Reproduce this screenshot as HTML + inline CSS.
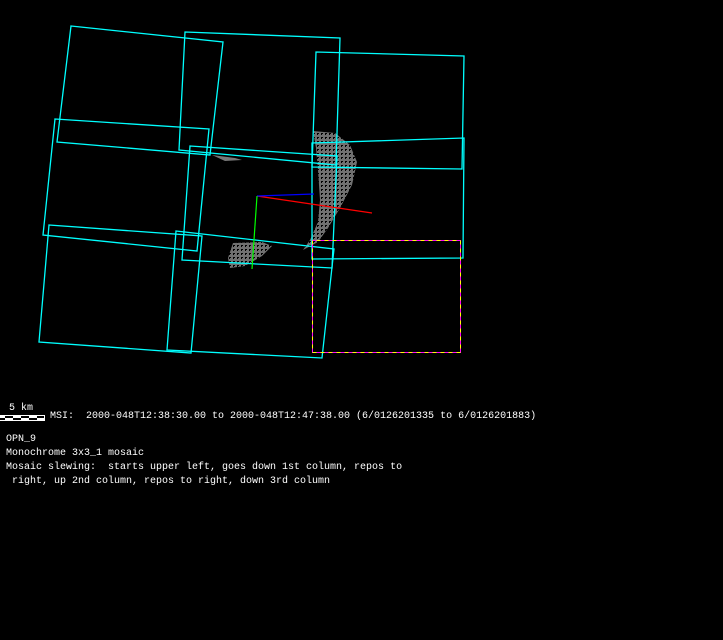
<!DOCTYPE html>
<html><head><style>
html,body{margin:0;padding:0;background:#000;width:723px;height:640px;overflow:hidden}
svg{position:absolute;left:0;top:0}
.t{position:absolute;color:#fff;font:10px "Liberation Mono",monospace;white-space:pre;line-height:14px}
</style></head><body>
<svg width="723" height="640" viewBox="0 0 723 640">
<defs>
<pattern id="g" width="4" height="4" patternUnits="userSpaceOnUse">
<rect width="4" height="4" fill="#707070"/><rect x="1" y="1" width="2" height="1" fill="#000"/><rect x="1" y="2" width="1" height="1" fill="#000"/>
</pattern>
</defs>
<path d="M313,131 L335,133 L350,145 L357,162 L352,185 L340,208 L328,228 L318,242 L303,250 L310,240 L318,222 L320,200 L318,170 L316,148 Z" fill="url(#g)"/>
<path d="M233,243 L262,242 L272,246 L262,256 L245,266 L230,268 L228,258 Z" fill="url(#g)"/>
<path d="M212,155 L235,158 L242,160 L225,161 Z" fill="#777"/>
<g fill="none" stroke="#0ff" stroke-width="1.3">
<polygon points="71,26 223,42 210,155 57,142"/>
<polygon points="55,119 209,129 197,251 43,235"/>
<polygon points="49,225 202,236 191,353 39,342"/>
<polygon points="185,32 340,38 336,165 179,150"/>
<polygon points="190,146 337,156 332,268 182,260"/>
<polygon points="176,231 334,249 322,358 167,350"/>
<polygon points="316,52 464,56 462,169 312,167"/>
<polygon points="312,143 464,138 463,258 312,259"/>
</g>
<rect x="312.5" y="240.5" width="148" height="112" fill="none" stroke="#ff0" stroke-width="1"/>
<rect x="312.5" y="240.5" width="148" height="112" fill="none" stroke="#f0f" stroke-width="1" stroke-dasharray="4 4"/>
<line x1="257" y1="196" x2="372" y2="213" stroke="#f00" stroke-width="1.2"/>
<line x1="257" y1="196" x2="314" y2="194" stroke="#00f" stroke-width="1.2"/>
<line x1="257" y1="196" x2="252" y2="269" stroke="#0f0" stroke-width="1.2"/>
<rect x="0" y="415" width="45" height="6" fill="#fff"/>
<rect x="5" y="416" width="8" height="2" fill="#000"/><rect x="21" y="416" width="8" height="2" fill="#000"/><rect x="37" y="416" width="7" height="2" fill="#000"/>
<rect x="0" y="418" width="5" height="2" fill="#000"/><rect x="13" y="418" width="8" height="2" fill="#000"/><rect x="29" y="418" width="8" height="2" fill="#000"/>
</svg>
<div class="t" style="left:9px;top:402px">5 km</div>
<div class="t" style="left:50px;top:410px">MSI:  2000-048T12:38:30.00 to 2000-048T12:47:38.00 (6/0126201335 to 6/0126201883)</div>
<div class="t" style="left:6px;top:433px">OPN_9
Monochrome 3x3_1 mosaic
Mosaic slewing:  starts upper left, goes down 1st column, repos to
 right, up 2nd column, repos to right, down 3rd column</div>
</body></html>
